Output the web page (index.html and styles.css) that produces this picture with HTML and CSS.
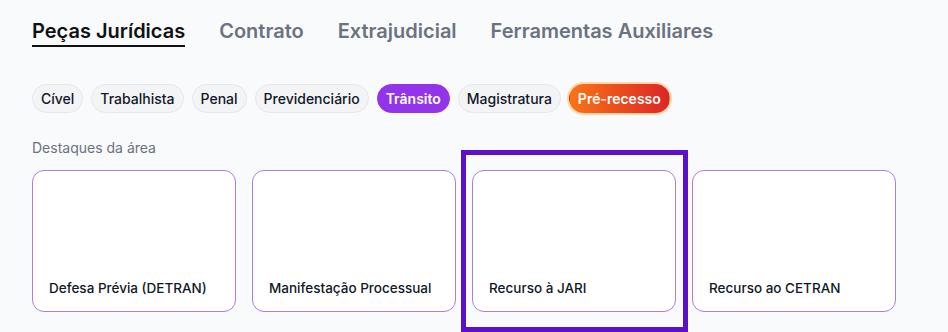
FILE: index.html
```html
<!DOCTYPE html>
<html lang="pt-BR">
<head>
<meta charset="utf-8">
<title>Peças Jurídicas</title>
<link rel="stylesheet" href="styles.css">
</head>
<body>
<div class="page">
  <nav class="tabs">
    <span class="tab active">Peças Jurídicas</span>
    <span class="tab">Contrato</span>
    <span class="tab">Extrajudicial</span>
    <span class="tab">Ferramentas Auxiliares</span>
  </nav>
  <div class="pills">
    <span class="pill">Cível</span>
    <span class="pill">Trabalhista</span>
    <span class="pill">Penal</span>
    <span class="pill">Previdenciário</span>
    <span class="pill pill-active">Trânsito</span>
    <span class="pill">Magistratura</span>
    <span class="pill pill-hot">Pré-recesso</span>
  </div>
  <div class="section-label">Destaques da área</div>
  <div class="cards">
    <div class="card">Defesa Prévia (DETRAN)</div>
    <div class="card">Manifestação Processual</div>
    <div class="card">Recurso à JARI</div>
    <div class="card">Recurso ao CETRAN</div>
  </div>
  <div class="highlight"></div>
</div>
</body>
</html>
```
FILE: styles.css
```css
html, body {
  margin: 0;
  padding: 0;
  background: #f9fafb;
}
body {
  font-family: Inter, "Noto Sans", sans-serif;
  color: #111827;
}
.page {
  position: relative;
  padding: 0 32px;
  height: 332px;
  overflow: hidden;
}
.tabs {
  display: flex;
  gap: 34px;
  padding-top: 18px;
}
.tab {
  font-size: 20px;
  font-weight: 600;
  line-height: 27px;
  color: #6b7280;
  border-bottom: 2px solid transparent;
}
.tab.active {
  color: #111111;
  border-bottom-color: #111111;
}
.pills {
  display: flex;
  gap: 8px;
  margin-top: 37px;
}
.pill {
  font-size: 14px;
  font-weight: 500;
  line-height: 27px;
  padding: 0 8px;
  border: 1px solid #e5e7eb;
  background: #f3f4f6;
  border-radius: 999px;
  color: #111827;
}
.pill-active {
  background: #9333ea;
  border-color: #9333ea;
  color: #ffffff;
  font-weight: 600;
}
.pill-hot {
  background: linear-gradient(90deg, #f97316, #dc2626);
  border-color: transparent;
  color: #ffffff;
  font-weight: 600;
  box-shadow: 0 0 0 2px #fed7aa;
}
.section-label {
  margin-top: 25px;
  font-size: 14px;
  line-height: 20px;
  color: #6b7280;
}
.cards {
  display: grid;
  grid-template-columns: repeat(4, 204px);
  gap: 16px;
  margin-top: 12px;
}
.card {
  height: 142px;
  box-sizing: border-box;
  background: #ffffff;
  border: 1px solid #b07ce0;
  border-radius: 12px;
  display: flex;
  align-items: flex-end;
  padding: 0 16px 13px;
  font-size: 13.5px;
  font-weight: 500;
  line-height: 20px;
  color: #111827;
}
.highlight {
  position: absolute;
  left: 461px;
  top: 150px;
  width: 227px;
  height: 182px;
  box-sizing: border-box;
  border: 5px solid #5b10c9;
}
```
